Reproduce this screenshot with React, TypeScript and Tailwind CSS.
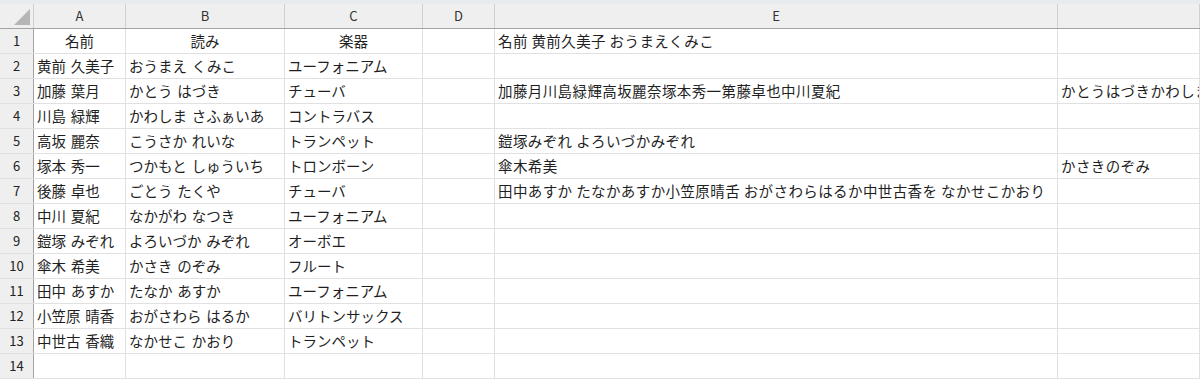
const cols = ['A', 'B', 'C', 'D', 'E', '']
const widths = ['w-[92px]', 'w-[159px]', 'w-[138px]', 'w-[72px]', 'w-[563px]', 'flex-1']

const rows: string[][] = [
  ['名前', '読み', '楽器', '', '名前 黄前久美子 おうまえくみこ', ''],
  ['黄前 久美子', 'おうまえ くみこ', 'ユーフォニアム', '', '', ''],
  ['加藤 葉月', 'かとう はづき', 'チューバ', '', '加藤月川島緑輝高坂麗奈塚本秀一第藤卓也中川夏紀', 'かとうはづきかわしまさふぁいあ'],
  ['川島 緑輝', 'かわしま さふぁいあ', 'コントラバス', '', '', ''],
  ['高坂 麗奈', 'こうさか れいな', 'トランペット', '', '鎧塚みぞれ よろいづかみぞれ', ''],
  ['塚本 秀一', 'つかもと しゅういち', 'トロンボーン', '', '傘木希美', 'かさきのぞみ'],
  ['後藤 卓也', 'ごとう たくや', 'チューバ', '', '田中あすか たなかあすか小笠原晴舌 おがさわらはるか中世古香を なかせこかおり', ''],
  ['中川 夏紀', 'なかがわ なつき', 'ユーフォニアム', '', '', ''],
  ['鎧塚 みぞれ', 'よろいづか みぞれ', 'オーボエ', '', '', ''],
  ['傘木 希美', 'かさき のぞみ', 'フルート', '', '', ''],
  ['田中 あすか', 'たなか あすか', 'ユーフォニアム', '', '', ''],
  ['小笠原 晴香', 'おがさわら はるか', 'バリトンサックス', '', '', ''],
  ['中世古 香織', 'なかせこ かおり', 'トランペット', '', '', ''],
  ['', '', '', '', '', ''],
]

export default function App() {
  return (
    <div
      className="w-[1200px] h-[380px] overflow-hidden bg-white text-[#1f1f1f]"
      style={{ fontFamily: '"Noto Sans CJK JP", "Noto Sans", sans-serif' }}
    >
      {/* top strip */}
      <div className="h-[4px] bg-[#e7ebef]" />

      {/* column headers */}
      <div className="flex h-[25px] bg-[#efefef] border-b border-[#a3a3a3]">
        <div className="w-[34px] shrink-0 border-r border-[#d0d0d0] flex items-end justify-end pr-[3px] pb-[3px]">
          <div className="w-0 h-0 border-l-[16px] border-l-transparent border-b-[16px] border-b-[#b5b5b5]" />
        </div>
        {cols.map((c, i) => (
          <div
            key={i}
            className={`${widths[i]} shrink-0 border-r border-[#d0d0d0] flex items-center justify-center text-[13px] text-[#333]`}
          >
            {c}
          </div>
        ))}
      </div>

      {/* rows */}
      {rows.map((r, ri) => (
        <div key={ri} className="flex h-[25px] border-b border-[#e1e1e1]">
          <div className="w-[34px] shrink-0 bg-[#efefef] border-r border-[#a3a3a3] flex items-center justify-center text-[13px] text-[#222]">
            {ri + 1}
          </div>
          {r.map((v, ci) => (
            <div
              key={ci}
              className={`${widths[ci]} shrink-0 border-r border-[#e1e1e1] flex items-center px-[3px] text-[14.5px] leading-none whitespace-pre ${
                ri === 0 && ci < 3 ? 'justify-center' : ''
              } ${ci >= 4 ? 'tracking-[0.4px] overflow-hidden' : 'overflow-hidden'}`}
            >
              {ci < 3 ? v.replace(' ', '\u2004') : v}
            </div>
          ))}
        </div>
      ))}
    </div>
  )
}
